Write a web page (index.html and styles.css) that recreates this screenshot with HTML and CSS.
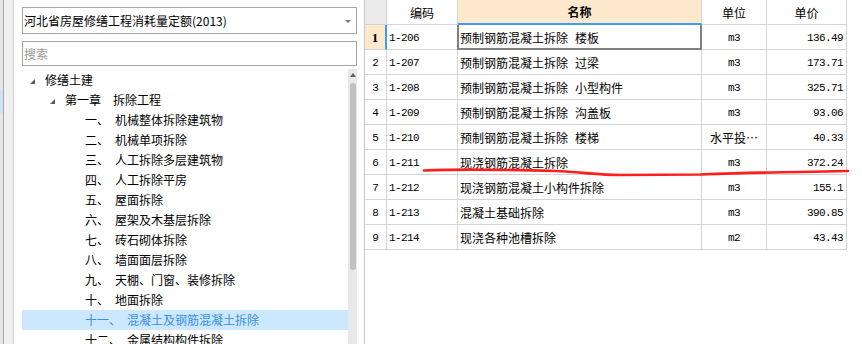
FILE: index.html
```html
<!DOCTYPE html>
<html lang="zh-CN">
<head>
<meta charset="utf-8">
<title>定额</title>
<link rel="stylesheet" href="styles.css">
</head>
<body>
<div class="app">
  <div class="strip"><div class="strip-edge"><div class="strip-mark"></div></div></div>
  <div class="left">
    <div class="select"><span>河北省房屋修缮工程消耗量定额(2013)</span><span class="select-arrow"></span></div>
    <div class="search">搜索</div>
    <div class="tree-wrap">
      <div class="tree">
        <div class="row lv0"><span class="tri"></span>修缮土建</div>
        <div class="row lv1"><span class="tri"></span>第一章　拆除工程</div>
        <div class="row lv2"><span class="num">一、</span>机械整体拆除建筑物</div>
        <div class="row lv2"><span class="num">二、</span>机械单项拆除</div>
        <div class="row lv2"><span class="num">三、</span>人工拆除多层建筑物</div>
        <div class="row lv2"><span class="num">四、</span>人工拆除平房</div>
        <div class="row lv2"><span class="num">五、</span>屋面拆除</div>
        <div class="row lv2"><span class="num">六、</span>屋架及木基层拆除</div>
        <div class="row lv2"><span class="num">七、</span>砖石砌体拆除</div>
        <div class="row lv2"><span class="num">八、</span>墙面面层拆除</div>
        <div class="row lv2"><span class="num">九、</span>天棚、门窗、装修拆除</div>
        <div class="row lv2"><span class="num">十、</span>地面拆除</div>
        <div class="row lv2 selected"><span class="num">十一、</span>混凝土及钢筋混凝土拆除</div>
        <div class="row lv2"><span class="num">十二、</span>金属结构构件拆除</div>
      </div>
      <div class="scrollbar"><span class="scroll-up"></span><span class="thumb"></span></div>
    </div>
  </div>
  <div class="right">
    <div class="table">
      <div class="cell hd rn-hd"></div>
      <div class="cell hd center">编码</div>
      <div class="cell hd center name-hd">名称</div>
      <div class="cell hd center">单位</div>
      <div class="cell hd center">单价</div>

      <div class="cell rn rn-active">1</div>
      <div class="cell code">1-206</div>
      <div class="cell name active">预制钢筋混凝土拆除<span class="gap">楼板</span></div>
      <div class="cell unit">m3</div>
      <div class="cell price">136.49</div>

      <div class="cell rn">2</div>
      <div class="cell code">1-207</div>
      <div class="cell name">预制钢筋混凝土拆除<span class="gap">过梁</span></div>
      <div class="cell unit">m3</div>
      <div class="cell price">173.71</div>

      <div class="cell rn">3</div>
      <div class="cell code">1-208</div>
      <div class="cell name">预制钢筋混凝土拆除<span class="gap">小型构件</span></div>
      <div class="cell unit">m3</div>
      <div class="cell price">325.71</div>

      <div class="cell rn">4</div>
      <div class="cell code">1-209</div>
      <div class="cell name">预制钢筋混凝土拆除<span class="gap">沟盖板</span></div>
      <div class="cell unit">m3</div>
      <div class="cell price">93.06</div>

      <div class="cell rn">5</div>
      <div class="cell code">1-210</div>
      <div class="cell name">预制钢筋混凝土拆除<span class="gap">楼梯</span></div>
      <div class="cell unit cjk">水平投…</div>
      <div class="cell price">40.33</div>

      <div class="cell rn">6</div>
      <div class="cell code">1-211</div>
      <div class="cell name">现浇钢筋混凝土拆除</div>
      <div class="cell unit">m3</div>
      <div class="cell price">372.24</div>

      <div class="cell rn">7</div>
      <div class="cell code">1-212</div>
      <div class="cell name">现浇钢筋混凝土小构件拆除</div>
      <div class="cell unit">m3</div>
      <div class="cell price">155.1</div>

      <div class="cell rn">8</div>
      <div class="cell code">1-213</div>
      <div class="cell name">混凝土基础拆除</div>
      <div class="cell unit">m3</div>
      <div class="cell price">390.85</div>

      <div class="cell rn">9</div>
      <div class="cell code">1-214</div>
      <div class="cell name">现浇各种池槽拆除</div>
      <div class="cell unit">m2</div>
      <div class="cell price">43.43</div>
    </div>
  </div>
  <svg class="annot" width="862" height="344" viewBox="0 0 862 344">
    <path d="M424 170.5 C460 169 520 170 556 171 C580 172 600 175 620 175 L700 174.5 C730 173.5 760 172.5 800 172 L848 171" fill="none" stroke="#ff1e1e" stroke-width="2.7" stroke-linecap="round"/>
  </svg>
</div>
</body>
</html>
```
FILE: styles.css
```css
body {
  margin: 0;
  background: #fff;
  font-family: "Noto Sans CJK SC", "Noto Sans", sans-serif;
  font-size: 12px;
  color: #000;
}

.app {
  position: relative;
  display: flex;
  width: 862px;
  height: 344px;
  overflow: hidden;
}

.strip {
  width: 13px;
  flex: none;
  display: flex;
  background: #f0f0f0;
  border-right: 1px solid #cfcfcf;
}

.strip-edge {
  width: 3px;
  background: #e6e6e6;
  border-right: 1px solid #a8a8a8;
}

.strip-mark {
  margin-top: 90px;
  height: 23px;
  background: #cfe4f7;
}

.left {
  width: 350px;
  flex: none;
  box-sizing: border-box;
  padding: 7px 7px 0 8px;
  display: flex;
  flex-direction: column;
}

.select {
  height: 27px;
  box-sizing: border-box;
  border: 1px solid #a6a6a6;
  display: flex;
  align-items: center;
  justify-content: space-between;
  padding: 0 5px 0 1px;
  white-space: nowrap;
}

.select-arrow {
  width: 0;
  height: 0;
  border-left: 3px solid transparent;
  border-right: 3px solid transparent;
  border-top: 3px solid #777;
  margin-top: 1px;
}

.search {
  margin-top: 7px;
  height: 25px;
  box-sizing: border-box;
  border: 1px solid #a6a6a6;
  display: flex;
  align-items: center;
  padding-left: 1px;
  color: #9a9a9a;
}

.tree-wrap {
  margin-top: 3px;
  flex: 1;
  min-height: 0;
  display: flex;
  overflow: hidden;
}

.tree {
  flex: 1;
  padding-top: 1px;
}

.row {
  height: 20px;
  line-height: 20px;
  display: flex;
  align-items: center;
  white-space: nowrap;
}

.lv0 { padding-left: 8px; }
.lv1 { padding-left: 28px; }
.lv2 { padding-left: 63px; }

.tri {
  width: 0;
  height: 0;
  border-left: 5px solid transparent;
  border-bottom: 5px solid #5a5a5a;
  margin: 2px 10px 0 0;
}

.num {
  margin-right: 6px;
}

.selected {
  background: #cce8ff;
  color: #3a8ee6;
}

.scrollbar {
  width: 9px;
  flex: none;
  background: #e8e8e8;
  display: flex;
  flex-direction: column;
  align-items: center;
}

.scroll-up {
  width: 0;
  height: 0;
  border-left: 3px solid transparent;
  border-right: 3px solid transparent;
  border-bottom: 4px solid #606060;
  margin-top: 4px;
}

.thumb {
  width: 6px;
  height: 187px;
  margin-top: 6px;
  background: #c1c1c1;
  border-radius: 3px;
}

.right {
  flex: 1;
  border-left: 1px solid #c8c8c8;
}

.table {
  display: grid;
  grid-template-columns: 22px 71px 244px 65px 80px;
  grid-template-rows: 25px;
  grid-auto-rows: 25px;
  width: 482px;
}

.cell {
  position: relative;
  box-sizing: border-box;
  border-right: 1px solid #d4d4d4;
  border-bottom: 1px solid #d4d4d4;
  display: flex;
  align-items: center;
  white-space: nowrap;
  overflow: visible;
  padding-top: 1px;
}

.hd {
  padding-top: 0;
}

.center {
  justify-content: center;
}

.rn-hd {
  background: #ebebeb;
}

.name-hd {
  background: #fee9cd;
  font-weight: bold;
  border-bottom: 2px solid #3d9bf5;
}

.rn {
  justify-content: center;
  font-family: "Liberation Mono", monospace;
  font-size: 11px;
}

.rn-active {
  background: #fee9cd;
  font-family: "Liberation Serif", serif;
  font-weight: bold;
  font-size: 13px;
  border-right: 2px solid #3d9bf5;
}

.code {
  padding-left: 2px;
  font-family: "Liberation Mono", monospace;
  font-size: 11px;
  letter-spacing: -0.6px;
}

.name {
  padding-left: 2px;
}

.gap {
  margin-left: 7px;
}

.active::after {
  content: "";
  position: absolute;
  left: -1px;
  top: 0;
  right: -1px;
  bottom: -1px;
  border: 2px solid #808080;
  border-top: none;
}

.unit {
  justify-content: center;
  font-family: "Liberation Mono", monospace;
  font-size: 11px;
  letter-spacing: -0.6px;
}

.unit.cjk {
  font-family: "Noto Sans CJK SC", sans-serif;
  font-size: 12px;
  letter-spacing: 0;
}

.price {
  justify-content: flex-end;
  padding-right: 3px;
  font-family: "Liberation Mono", monospace;
  font-size: 11px;
  letter-spacing: -0.6px;
}

.annot {
  position: absolute;
  left: 0;
  top: 0;
  pointer-events: none;
}
```
